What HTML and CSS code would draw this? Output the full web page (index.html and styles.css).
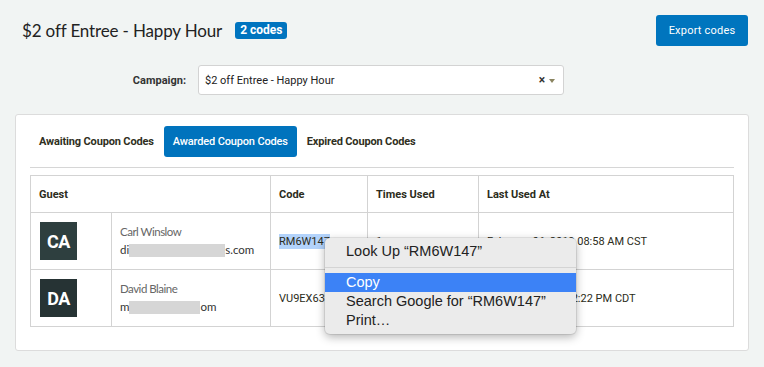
FILE: index.html
```html
<!DOCTYPE html>
<html lang="en">
<head>
    <meta charset="UTF-8">
    <meta name="viewport" content="width=device-width, initial-scale=1.0">
    <title>Coupon Codes</title>
    <link rel="stylesheet" href="styles.css">
</head>
<body>
    <div class="page-header">
        <div class="title-wrap">
            <h1>$2 off Entree - Happy Hour</h1>
            <span class="badge">2 codes</span>
        </div>
        <button class="export-btn">Export codes</button>
    </div>

    <div class="campaign-row">
        <label class="campaign-label">Campaign:</label>
        <div class="select-box">
            <span class="select-value">$2 off Entree - Happy Hour</span>
            <span class="select-clear">&times;</span>
            <span class="select-arrow"></span>
        </div>
    </div>

    <div class="codes-card">
        <div class="tabs">
            <div class="tab">Awaiting Coupon Codes</div>
            <div class="tab active">Awarded Coupon Codes</div>
            <div class="tab">Expired Coupon Codes</div>
        </div>

        <table class="codes-table">
            <colgroup>
                <col class="c-avatar">
                <col class="c-guest">
                <col class="c-code">
                <col class="c-times">
                <col>
            </colgroup>
            <thead>
                <tr>
                    <th colspan="2">Guest</th>
                    <th>Code</th>
                    <th>Times Used</th>
                    <th>Last Used At</th>
                </tr>
            </thead>
            <tbody>
                <tr>
                    <td class="avatar-cell"><div class="avatar">CA</div></td>
                    <td>
                        <div class="guest-name">Carl Winslow</div>
                        <div class="guest-email">di<span class="redact redact-1"></span>s.com</div>
                    </td>
                    <td><span class="selected">RM6W147</span></td>
                    <td>1</td>
                    <td>February 06, 2019 08:58 AM CST</td>
                </tr>
                <tr>
                    <td class="avatar-cell"><div class="avatar dark">DA</div></td>
                    <td>
                        <div class="guest-name">David Blaine</div>
                        <div class="guest-email">m<span class="redact redact-2"></span>om</div>
                    </td>
                    <td>VU9EX63</td>
                    <td>1</td>
                    <td>March 12, 2019 02:22 PM CDT</td>
                </tr>
            </tbody>
        </table>
    </div>

    <div class="context-menu">
        <div class="menu-item">Look Up “RM6W147”</div>
        <div class="menu-sep"></div>
        <div class="menu-item highlighted">Copy</div>
        <div class="menu-item">Search Google for “RM6W147”</div>
        <div class="menu-item">Print…</div>
    </div>
</body>
</html>
```

FILE: styles.css
```css
body {
    margin: 0;
    background: #f1f4f3;
    font-family: Roboto, "Liberation Sans", sans-serif;
    color: #333;
    position: relative;
    height: 367px;
    overflow: hidden;
}
.page-header {
    display: flex;
    justify-content: space-between;
    align-items: center;
    padding: 15px 16px 0 22px;
}
.title-wrap {
    display: flex;
    align-items: center;
}
h1 {
    margin: 0;
    font-family: Lato, sans-serif;
    font-weight: 400;
    font-size: 17px;
    letter-spacing: -0.15px;
    color: #222;
}
.badge {
    margin-left: 13px;
    background: #0074bf;
    color: white;
    font-weight: 700;
    font-size: 12px;
    padding: 2px 5px;
    border-radius: 3px;
    line-height: 13px;
}
.export-btn {
    width: 92px;
    height: 31px;
    background: #0075be;
    color: white;
    border: none;
    border-radius: 3px;
    font-family: Roboto, sans-serif;
    font-size: 11px;
    letter-spacing: 0.2px;
}
.campaign-row {
    display: flex;
    align-items: center;
    gap: 12px;
    margin-top: 19px;
}
.campaign-label {
    width: 186px;
    text-align: right;
    font-size: 11px;
    font-weight: 700;
    color: #333;
}
.select-box {
    width: 366px;
    height: 30px;
    box-sizing: border-box;
    background: white;
    border: 1px solid #d3d3d3;
    border-radius: 3px;
    display: flex;
    align-items: center;
    padding: 0 8px 0 6px;
    font-size: 11px;
    color: #222;
}
.select-value {
    flex: 1;
}
.select-clear {
    font-weight: 700;
    font-size: 12px;
    color: #333;
    margin-right: 4px;
}
.select-arrow {
    width: 0;
    height: 0;
    border-left: 3px solid transparent;
    border-right: 3px solid transparent;
    border-top: 4px solid #8a8460;
    margin-top: 2px;
}
.codes-card {
    margin: 19px 15px 0 15px;
    background: white;
    border: 1px solid #dcdcdc;
    border-radius: 3px;
    padding: 11px 14px 23px 14px;
}
.tabs {
    display: flex;
    gap: 1px;
    padding-bottom: 10px;
    border-bottom: 1px solid #d6d6d6;
}
.tab {
    height: 31px;
    line-height: 31px;
    padding: 0 9px;
    font-size: 11px;
    font-weight: 700;
    letter-spacing: -0.15px;
    color: #2f2f22;
    border-radius: 3px;
}
.tab.active {
    background: #0073bd;
    color: white;
    font-weight: 500;
}
.codes-table {
    width: 100%;
    table-layout: fixed;
    margin-top: 7px;
    border-collapse: collapse;
    font-size: 11px;
    color: #2c2c20;
}
.c-avatar {
    width: 81px;
}
.c-guest {
    width: 159px;
}
.c-code {
    width: 97px;
}
.c-times {
    width: 111px;
}
.codes-table th,
.codes-table td {
    border: 1px solid #d3d3d3;
    text-align: left;
    padding: 0 8px;
    white-space: nowrap;
}
.codes-table th {
    height: 36px;
    font-weight: 700;
}
.codes-table td {
    height: 56px;
}
.codes-table td.avatar-cell {
    padding: 0 0 0 9px;
}
.avatar {
    width: 37px;
    height: 38px;
    background: #2e3f3f;
    color: white;
    font-weight: 700;
    font-size: 18px;
    letter-spacing: -0.5px;
    display: flex;
    align-items: center;
    justify-content: center;
}
.avatar.dark {
    background: #263334;
}
.guest-name {
    font-family: Lato, sans-serif;
    font-size: 11.5px;
    letter-spacing: -0.5px;
    color: #666;
    margin-bottom: 5px;
}
.guest-email {
    font-family: Lato, sans-serif;
    font-size: 11.5px;
    color: #333;
}
.redact {
    display: inline-block;
    height: 13px;
    background: #d6d6d6;
    vertical-align: middle;
}
.redact-1 {
    width: 96px;
}
.redact-2 {
    width: 71px;
}
.selected {
    background: #b3d3fb;
    padding: 1px 0;
}
.context-menu {
    position: absolute;
    left: 325px;
    top: 238px;
    width: 251px;
    height: 96px;
    box-sizing: border-box;
    padding-top: 4px;
    background: #ebebeb;
    border-radius: 5px;
    box-shadow: 0 3px 10px rgba(0, 0, 0, 0.3), 0 0 0 1px rgba(0, 0, 0, 0.08);
    font-family: "Liberation Sans", sans-serif;
    font-size: 14.5px;
    color: #222;
}
.menu-item {
    height: 19px;
    line-height: 19px;
    padding-left: 21px;
}
.menu-sep {
    height: 1px;
    background: #d4d4d4;
    margin: 6px 0 5px;
}
.menu-item.highlighted {
    background: #3c82f6;
    color: white;
}
```
